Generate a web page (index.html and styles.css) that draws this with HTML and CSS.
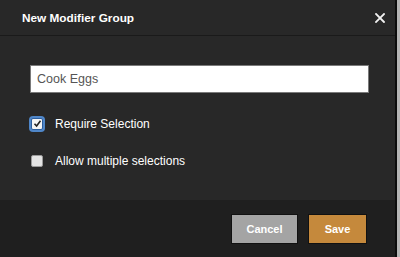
FILE: index.html
```html
<!DOCTYPE html>
<html>
<head>
<meta charset="utf-8">
<link rel="stylesheet" href="styles.css">
</head>
<body>
<div class="page">
  <div class="dialog">
    <div class="header">
      <div class="title">New Modifier Group</div>
      <svg class="close" width="10" height="10" viewBox="0 0 10 10"><path d="M1 1L9 9M9 1L1 9" stroke="#f2f2f2" stroke-width="1.8" stroke-linecap="square"/></svg>
    </div>
    <div class="body">
      <div class="input">Cook Eggs</div>
      <div class="row row-first">
        <span class="box checked">
          <svg width="9" height="9" viewBox="0 0 9 9"><path d="M1.5 4.8L3.6 7L7.5 1.8" fill="none" stroke="#222" stroke-width="1.6"/></svg>
        </span>
        <span class="label">Require Selection</span>
      </div>
      <div class="row">
        <span class="box"></span>
        <span class="label">Allow multiple selections</span>
      </div>
    </div>
    <div class="footer">
      <div class="btn cancel">Cancel</div>
      <div class="btn save">Save</div>
    </div>
  </div>
  <div class="edge-dark"></div>
  <div class="edge-light"></div>
</div>
</body>
</html>
```
FILE: styles.css
```css
html, body {
  margin: 0;
  padding: 0;
  background: #282828;
  font-family: "Liberation Sans", Arial, sans-serif;
}
.page {
  display: flex;
  width: 400px;
  height: 257px;
}
.dialog {
  width: 395px;
  display: flex;
  flex-direction: column;
  background: #282828;
}
.edge-dark {
  width: 2px;
  background: #0c0c0c;
}
.edge-light {
  flex: 1;
  background: #b5b5b5;
}
.header {
  height: 35px;
  border-bottom: 1px solid #1a1a1a;
  display: flex;
  align-items: center;
  justify-content: space-between;
  padding: 0 10px 0 22px;
  box-sizing: content-box;
}
.title {
  color: #ffffff;
  font-weight: bold;
  font-size: 11.8px;
  margin-top: 1px;
}
.close {
  display: block;
  margin-top: 1px;
}
.body {
  flex: 1;
  padding: 29px 26px 0 30px;
}
.input {
  height: 28px;
  box-sizing: border-box;
  background: #ffffff;
  border: 1px solid #7a7a7a;
  color: #555555;
  font-size: 12.5px;
  line-height: 26px;
  padding-left: 6px;
}
.row {
  display: flex;
  align-items: center;
  height: 19px;
  margin-top: 18px;
}
.row-first {
  margin-top: 21px;
}
.box {
  width: 10px;
  height: 10px;
  margin-left: 1px;
  background: #e4e4e4;
  border: 1px solid #9a9a9a;
  border-radius: 2px;
  display: flex;
  align-items: center;
  justify-content: center;
  box-sizing: content-box;
}
.box.checked {
  background: #f4f4f4;
  border-color: #2c5d9c;
  box-shadow: 0 0 0 2px #4f86c8;
}
.label {
  color: #ffffff;
  font-size: 12px;
  margin-left: 12px;
}
.footer {
  height: 57px;
  background: #1f1f1f;
  display: flex;
  justify-content: flex-end;
  gap: 10px;
  padding: 14px 28px 0 0;
  box-sizing: border-box;
}
.btn {
  height: 30px;
  box-sizing: border-box;
  border: 1px solid #111111;
  color: #ffffff;
  font-weight: bold;
  font-size: 11px;
  display: flex;
  align-items: center;
  justify-content: center;
}
.cancel {
  width: 67px;
  background: #a4a4a4;
}
.save {
  width: 59px;
  background: #c5893c;
}
```
